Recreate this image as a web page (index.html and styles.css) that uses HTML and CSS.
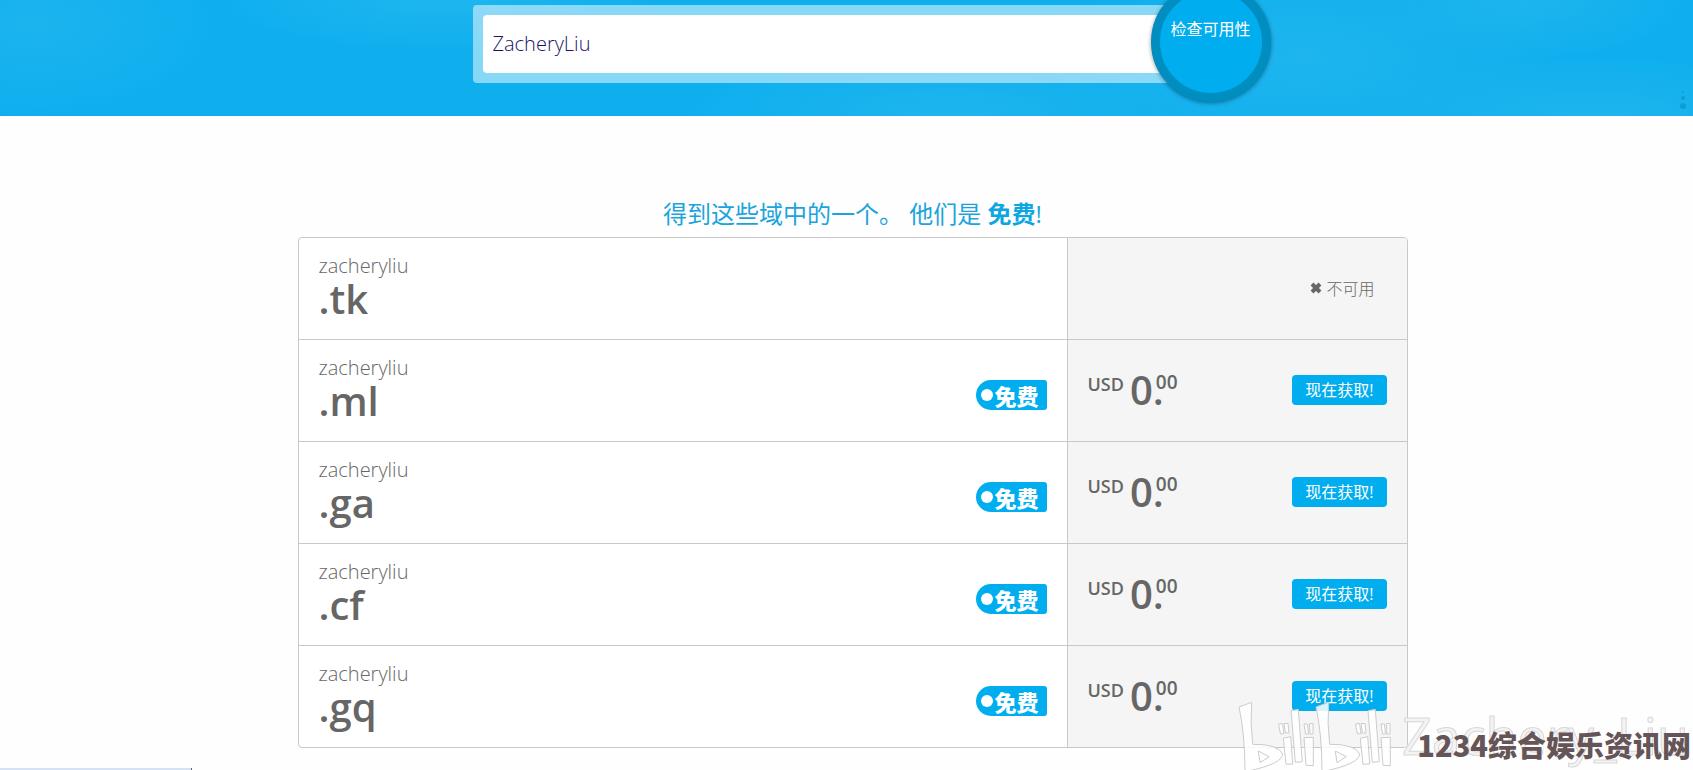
FILE: index.html
```html
<!DOCTYPE html>
<html lang="zh-CN">
<head>
<meta charset="utf-8">
<title>域名可用性</title>
<link rel="stylesheet" href="styles.css">
</head>
<body>
<header class="hero">
  <form class="search">
    <input class="search-input" type="text" value="ZacheryLiu" aria-label="域名">
    <button class="search-button" type="button">检查可用性</button>
  </form>
  <svg class="hero-dots" viewBox="0 0 6 20" aria-hidden="true"><circle cx="3" cy="2" r="1"/><circle cx="3" cy="8" r="2"/><circle cx="3" cy="16" r="3"/></svg>
</header>
<main class="results">
  <h1 class="title">得到这些域中的一个。 他们是 <strong>免费</strong>!</h1>
  <ul class="domains">
    <li class="domain">
      <div class="info"><div class="name"><span class="host">zacheryliu</span><span class="tld">.tk</span></div></div>
      <div class="offer offer-none"><span class="taken"><svg class="cross" viewBox="0 0 12 12" aria-hidden="true"><path d="M2 2L10 10M10 2L2 10"/></svg>不可用</span></div>
    </li>
    <li class="domain">
      <div class="info"><div class="name"><span class="host">zacheryliu</span><span class="tld">.ml</span></div><span class="tag">免费</span></div>
      <div class="offer"><div class="price"><span class="currency">USD</span><span class="whole">0.</span><span class="cents">00</span></div><button class="get" type="button">现在获取!</button></div>
    </li>
    <li class="domain">
      <div class="info"><div class="name"><span class="host">zacheryliu</span><span class="tld">.ga</span></div><span class="tag">免费</span></div>
      <div class="offer"><div class="price"><span class="currency">USD</span><span class="whole">0.</span><span class="cents">00</span></div><button class="get" type="button">现在获取!</button></div>
    </li>
    <li class="domain">
      <div class="info"><div class="name"><span class="host">zacheryliu</span><span class="tld">.cf</span></div><span class="tag">免费</span></div>
      <div class="offer"><div class="price"><span class="currency">USD</span><span class="whole">0.</span><span class="cents">00</span></div><button class="get" type="button">现在获取!</button></div>
    </li>
    <li class="domain">
      <div class="info"><div class="name"><span class="host">zacheryliu</span><span class="tld">.gq</span></div><span class="tag">免费</span></div>
      <div class="offer"><div class="price"><span class="currency">USD</span><span class="whole">0.</span><span class="cents">00</span></div><button class="get" type="button">现在获取!</button></div>
    </li>
  </ul>
</main>
<div class="status" aria-hidden="true"></div>
<div class="watermark">
  <svg class="mark" viewBox="0 0 160 70" aria-hidden="true">
    <g id="half">
      <path fill-rule="evenodd" d="M1 7L13.700 2.300Q12 24 14.700 44.300Q40 44 44.700 54Q44 64 10 71L7 71Q7 35 1 7ZM20.300 51L31.300 56.700L22 62.700Z"/>
      <path d="M45.300 38.300L52.700 36.700L54.700 64L48 64.300ZM53 10.700L60.300 9.300L64.300 61.700L57.300 62.300ZM66 37.700L75.300 37.300V65.700L68 65.300Z"/>
      <path d="M40.500 24L44.500 23.500L46 33.500L42.500 34ZM46 23.500H50L51 33H47.500ZM66 24H69.500L70.500 34H67.500ZM71.500 23.500H75V34H72Z"/>
    </g>
    <use href="#half" x="77"/>
  </svg>
  <span class="author">Zachery_Liu</span>
</div>
<div class="site">1234综合娱乐资讯网</div>
</body>
</html>
```
FILE: styles.css
```css
* { box-sizing: border-box; }
body {
  margin: 0;
  position: relative;
  min-height: 100vh;
  overflow: hidden;
  background: #fefefe;
  color: #666;
  font-family: "Open Sans", "Noto Sans CJK SC", sans-serif;
}
button, input { font-family: inherit; border: 0; }
.hero {
  position: relative;
  display: flex;
  justify-content: center;
  padding: 5px 16px 33px;
  background:
    radial-gradient(180px 90px at 2% 20%, #1cb4ef, transparent),
    radial-gradient(220px 50px at 26% 0, #1eb6f0, transparent),
    radial-gradient(260px 70px at 56% 100%, #1eb5ee, transparent),
    radial-gradient(260px 110px at 77% 50%, #1eb5ee, transparent),
    radial-gradient(240px 60px at 94% 100%, #1eb5ee, transparent),
    radial-gradient(160px 60px at 90% 0, #1eb5ee, transparent),
    #0fafee;
}
.search {
  position: relative;
  width: 100%;
  max-width: 748px;
  padding: 10px;
  border-radius: 4px;
  background: rgba(255, 255, 255, 0.5);
}
.search-input {
  display: block;
  width: 100%;
  height: 58px;
  padding: 0 10px 2px;
  border-radius: 4px;
  background: #fff;
  color: #1b1464;
  font-size: 20px;
  font-weight: 300;
}
.search-button {
  position: absolute;
  right: -50px;
  bottom: -19px;
  width: 120px;
  height: 120px;
  padding: 0 0 28px;
  border: 9px solid #008dbf;
  border-radius: 50%;
  background: #00adee;
  box-shadow: 0 1px 4px rgba(0, 0, 0, 0.4);
  color: #fff;
  font-size: 16px;
  font-weight: 400;
}
.hero-dots {
  position: absolute;
  right: 7px;
  bottom: 6px;
  width: 6px;
  height: 20px;
  fill: #109ccc;
}
.results {
  max-width: 1122px;
  margin: 0 auto;
  padding: 80px 0 0 12px;
}
.title {
  margin: 0 0 5px;
  color: #1ba4dc;
  font-size: 24px;
  font-weight: 400;
  line-height: 36px;
  text-align: center;
}
.title strong { color: #0ca6e2; font-weight: 700; }
.domains {
  margin: 0;
  padding: 0;
  list-style: none;
  border: 1px solid #c8c8c8;
  border-radius: 4px;
  overflow: hidden;
  background: #fff;
}
.domain { display: flex; min-height: 102px; border-bottom: 1px solid #c8c8c8; }
.domain:last-child { border-bottom: 0; min-height: 101px; }
.info {
  flex: 1;
  display: flex;
  justify-content: space-between;
  align-items: flex-start;
  padding: 16px 20px 0;
}
.name { display: flex; flex-direction: column; }
.host { font-size: 20px; font-weight: 300; line-height: 24px; }
.tld { font-size: 40px; font-weight: 600; line-height: 42px; }
.tag {
  display: flex;
  align-items: center;
  gap: 1px;
  height: 30px;
  margin-top: 24px;
  padding: 0 8px 0 5px;
  border-radius: 15px 3px 3px 15px;
  background: #00adee;
  color: #fff;
  font-size: 22px;
  font-weight: 900;
}
.tag::before {
  content: "";
  width: 12px;
  height: 12px;
  border-radius: 50%;
  background: #fff;
}
.offer {
  width: 340px;
  display: flex;
  justify-content: space-between;
  align-items: center;
  padding: 0 20px 2px;
  border-left: 1px solid #c8c8c8;
  background: #f5f5f5;
}
.offer-none { justify-content: flex-end; padding-right: 32px; }
.taken { display: flex; align-items: center; gap: 4px; font-size: 16px; font-weight: 300; }
.cross { width: 12px; height: 12px; fill: none; stroke: #666; stroke-width: 4; }
.price { display: flex; align-items: flex-start; font-weight: 600; line-height: 48px; }
.currency { margin-right: 6px; font-size: 18px; line-height: 36px; }
.whole { font-size: 40px; }
.cents { margin-left: -8px; font-size: 19px; line-height: 32px; }
.get {
  height: 30px;
  padding: 0 13px 1px;
  border-radius: 4px;
  background: #00adee;
  color: #fff;
  font-size: 16px;
  font-weight: 400;
}
.status {
  position: absolute;
  left: 0;
  bottom: 0;
  width: 192px;
  height: 2px;
  border-right: 1px solid #667;
  background: #d5e2f5;
}
.watermark {
  position: absolute;
  right: 0;
  bottom: 0;
  width: 455px;
  display: flex;
  align-items: flex-start;
  gap: 4px;
}
.mark {
  flex: none;
  width: 160px;
  height: 70px;
  fill: rgba(255, 255, 255, 0.85);
  stroke: #cccccc;
  stroke-width: 1;
}
.author {
  color: #f3f3f3;
  font-size: 52px;
  font-weight: 400;
  line-height: 70px;
  -webkit-text-stroke: 1px #d8d8d8;
}
.site {
  position: absolute;
  right: 2px;
  bottom: 4px;
  color: #665558;
  font-family: "Noto Sans CJK SC", sans-serif;
  font-size: 29px;
  font-weight: 900;
  line-height: 44px;
}
```
